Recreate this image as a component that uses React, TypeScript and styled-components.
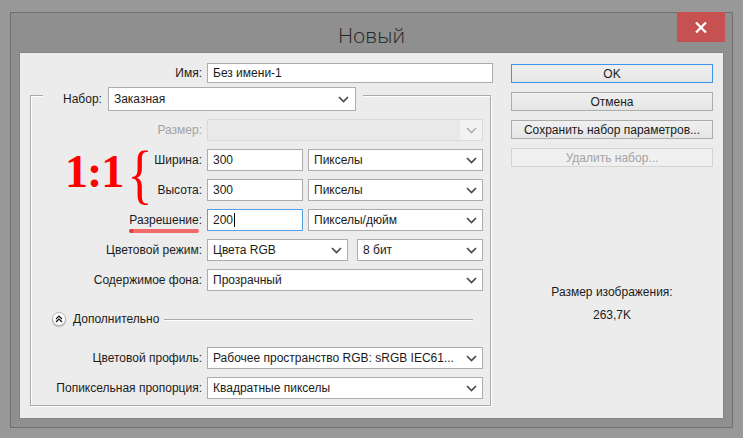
import styled, { createGlobalStyle } from "styled-components";

const GlobalStyle = createGlobalStyle`
  body {
    margin: 0;
    background: #989898;
    font-family: "Liberation Sans", Arial, sans-serif;
    font-size: 12px;
    color: #1b1b1b;
  }
`;

const Window = styled.div`
  box-sizing: border-box;
  width: 723px;
  height: 416px;
  margin: 12px 0 0 10px;
  background: #8f8f8f;
  border: 1px solid #707070;
  padding: 0 8px 8px 8px;
  display: flex;
  flex-direction: column;
`;

const TitleBar = styled.div`
  height: 39px;
  display: grid;
  grid-template-columns: 1fr auto 1fr;
  align-items: start;
`;

const Title = styled.div`
  grid-column: 2;
  font-family: "Open Sans", "Noto Sans", sans-serif;
  font-weight: 300;
  font-size: 21px;
  line-height: 26px;
  margin-top: 9px;
  color: #262626;
`;

const CloseButton = styled.div`
  grid-column: 3;
  justify-self: end;
  width: 48px;
  height: 30px;
  margin: -1px -1px 0 0;
  background: #c75050;
  display: flex;
  align-items: center;
  justify-content: center;
`;

const Content = styled.div`
  flex: 1;
  background: #ececec;
  border: 1px solid #858585;
  padding: 10px 10px 0 10px;
  display: grid;
  grid-template-columns: 463px 202px;
  column-gap: 18px;
  align-items: start;
`;

const LeftColumn = styled.div`
  display: flex;
  flex-direction: column;
`;

const NameRow = styled.div`
  display: grid;
  grid-template-columns: 172px 1fr;
  column-gap: 5px;
  align-items: center;
`;

const Label = styled.div<{ $disabled?: boolean }>`
  text-align: right;
  white-space: nowrap;
  color: ${(p) => (p.$disabled ? "#a3a3a3" : "#1b1b1b")};
`;

const MarkedLabel = styled(Label)`
  position: relative;
  justify-self: end;
  &::after {
    content: "";
    position: absolute;
    left: 0;
    right: 3px;
    bottom: -6px;
    height: 4px;
    border-radius: 2px;
    background: radial-gradient(circle at 2px 2px, #e23b3b 2px, transparent 2.5px), #f26b6b;
  }
`;

const TextInput = styled.div<{ $focused?: boolean; $height?: number }>`
  box-sizing: border-box;
  height: ${(p) => p.$height ?? 22}px;
  background: #fff;
  border: 1px solid ${(p) => (p.$focused ? "#569de5" : "#acacac")};
  padding-left: 5px;
  display: flex;
  align-items: center;
  white-space: nowrap;
`;

const Caret = styled.span`
  display: inline-block;
  width: 1px;
  height: 14px;
  background: #000;
  margin-left: 1px;
`;

const SelectBox = styled.div<{ $disabled?: boolean; $height?: number }>`
  box-sizing: border-box;
  height: ${(p) => p.$height ?? 22}px;
  background: ${(p) => (p.$disabled ? "#e9e9e9" : "#fff")};
  border: 1px solid ${(p) => (p.$disabled ? "#d9d9d9" : "#acacac")};
  padding-left: 5px;
  display: flex;
  align-items: center;
  white-space: nowrap;
  overflow: hidden;
`;

const SelectText = styled.span`
  flex: 1;
  overflow: hidden;
`;

const ChevronArea = styled.div<{ $disabled?: boolean }>`
  width: 22px;
  align-self: stretch;
  display: flex;
  align-items: center;
  justify-content: center;
  background: ${(p) => (p.$disabled ? "#f2f2f2" : "transparent")};
`;

const GroupBox = styled.div`
  position: relative;
  width: 461px;
  box-sizing: border-box;
  margin-top: 12px;
  border: 1px solid #a9a9a9;
  box-shadow: inset 1px 1px 0 #fff, 1px 1px 0 #fff;
  padding: 0 7px 6px 0;
`;

const Legend = styled.div`
  width: fit-content;
  margin: -9px 0 0 12px;
  padding: 0 7px 0 20px;
  background: #ececec;
  display: flex;
  align-items: center;
  gap: 6px;
`;

const LegendSelect = styled.div`
  width: 248px;
`;

const FormGrid = styled.div`
  margin-top: 8px;
  display: grid;
  grid-template-columns: 171px 276px;
  grid-auto-rows: 22px;
  column-gap: 5px;
  row-gap: 8px;
  align-items: center;
`;

const FieldPair = styled.div<{ $cols: string; $gap: number }>`
  display: grid;
  grid-template-columns: ${(p) => p.$cols};
  column-gap: ${(p) => p.$gap}px;
`;

const AdvancedRow = styled.div`
  margin: 21px 10px 0 21px;
  height: 14px;
  display: flex;
  align-items: center;
  gap: 7px;
`;

const RoundToggle = styled.div`
  width: 14px;
  height: 14px;
  box-sizing: border-box;
  border-radius: 50%;
  background: #fff;
  border: 1px solid #b5b5b5;
  box-shadow: 0 1px 1px rgba(0, 0, 0, 0.25);
  display: flex;
  align-items: center;
  justify-content: center;
`;

const Rule = styled.div`
  flex: 1;
  height: 1px;
  margin-left: -2px;
  background: #a9a9a9;
  box-shadow: 0 1px 0 #fff;
`;

const ProfileGrid = styled(FormGrid)`
  margin-top: 21px;
`;

const Annotation = styled.div`
  position: absolute;
  left: 34px;
  top: 50px;
  display: flex;
  align-items: center;
  color: #f00;
  font-family: "Liberation Serif", "Times New Roman", serif;
  pointer-events: none;
`;

const Ratio = styled.span`
  font-weight: bold;
  font-size: 46px;
  letter-spacing: -1px;
  line-height: 46px;
`;

const Brace = styled.span`
  font-size: 66px;
  line-height: 48px;
  margin-left: 1px;
  margin-top: 4px;
  transform: scaleX(0.8);
`;

const RightColumn = styled.div`
  padding-top: 1px;
  display: flex;
  flex-direction: column;
  gap: 9px;
`;

const Button = styled.div<{ $primary?: boolean; $disabled?: boolean }>`
  box-sizing: border-box;
  height: 19px;
  border: 1px solid ${(p) => (p.$primary ? "#3e95e8" : p.$disabled ? "#d3d3d3" : "#acacac")};
  background: ${(p) =>
    p.$disabled ? "#f0f0f0" : "linear-gradient(#f0f0f0, #e5e5e5)"};
  color: ${(p) => (p.$disabled ? "#a3a3a3" : "#1b1b1b")};
  display: flex;
  align-items: center;
  justify-content: center;
  white-space: nowrap;
`;

const SizeInfo = styled.div`
  margin-top: 109px;
  display: flex;
  flex-direction: column;
  align-items: center;
  gap: 8px;
  line-height: 15px;
`;

const Chevron = ({ disabled }: { disabled?: boolean }) => (
  <svg width="11" height="7" viewBox="0 0 11 7">
    <polyline
      points="1,1 5.5,5.5 10,1"
      fill="none"
      stroke={disabled ? "#b0b0b0" : "#4a4a4a"}
      strokeWidth="1.7"
    />
  </svg>
);

const Select = ({ value, disabled, height }: { value?: string; disabled?: boolean; height?: number }) => (
  <SelectBox $disabled={disabled} $height={height}>
    <SelectText>{value}</SelectText>
    <ChevronArea $disabled={disabled}>
      <Chevron disabled={disabled} />
    </ChevronArea>
  </SelectBox>
);

export default function App() {
  return (
    <>
      <GlobalStyle />
      <Window>
        <TitleBar>
          <Title>Новый</Title>
          <CloseButton>
            <svg width="12" height="11" viewBox="0 0 12 11">
              <path d="M1 0.5 L11 10.5 M11 0.5 L1 10.5" stroke="#fff" strokeWidth="2.2" />
            </svg>
          </CloseButton>
        </TitleBar>
        <Content>
          <LeftColumn>
            <NameRow>
              <Label>Имя:</Label>
              <TextInput $height={20}>Без имени-1</TextInput>
            </NameRow>
            <GroupBox>
              <Legend>
                <Label>Набор:</Label>
                <LegendSelect>
                  <Select value="Заказная" height={24} />
                </LegendSelect>
              </Legend>
              <Annotation>
                <Ratio>1:1</Ratio>
                <Brace>{"{"}</Brace>
              </Annotation>
              <FormGrid>
                <Label $disabled>Размер:</Label>
                <Select disabled />
                <Label>Ширина:</Label>
                <FieldPair $cols="96px 1fr" $gap={5}>
                  <TextInput>300</TextInput>
                  <Select value="Пикселы" />
                </FieldPair>
                <Label>Высота:</Label>
                <FieldPair $cols="96px 1fr" $gap={5}>
                  <TextInput>300</TextInput>
                  <Select value="Пикселы" />
                </FieldPair>
                <MarkedLabel>Разрешение:</MarkedLabel>
                <FieldPair $cols="96px 1fr" $gap={5}>
                  <TextInput $focused>
                    200<Caret />
                  </TextInput>
                  <Select value="Пикселы/дюйм" />
                </FieldPair>
                <Label>Цветовой режим:</Label>
                <FieldPair $cols="141px 1fr" $gap={9}>
                  <Select value="Цвета RGB" />
                  <Select value="8 бит" />
                </FieldPair>
                <Label>Содержимое фона:</Label>
                <Select value="Прозрачный" />
              </FormGrid>
              <AdvancedRow>
                <RoundToggle>
                  <svg width="8" height="8" viewBox="0 0 8 8">
                    <path d="M1 4 L4 1 L7 4 M1 7 L4 4 L7 7" fill="none" stroke="#111" strokeWidth="1.2" />
                  </svg>
                </RoundToggle>
                <span>Дополнительно</span>
                <Rule />
              </AdvancedRow>
              <ProfileGrid>
                <Label>Цветовой профиль:</Label>
                <Select value="Рабочее пространство RGB:  sRGB IEC61..." />
                <Label>Попиксельная пропорция:</Label>
                <Select value="Квадратные пикселы" />
              </ProfileGrid>
            </GroupBox>
          </LeftColumn>
          <RightColumn>
            <Button $primary>OK</Button>
            <Button>Отмена</Button>
            <Button>Сохранить набор параметров...</Button>
            <Button $disabled>Удалить набор...</Button>
            <SizeInfo>
              <span>Размер изображения:</span>
              <span>263,7K</span>
            </SizeInfo>
          </RightColumn>
        </Content>
      </Window>
    </>
  );
}
